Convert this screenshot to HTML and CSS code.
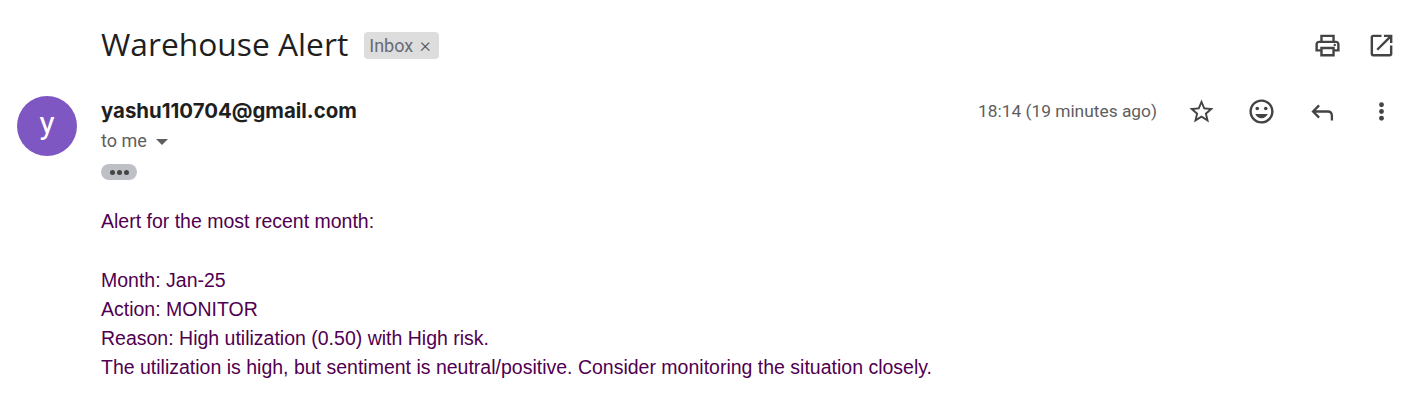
FILE: index.html
```html
<!DOCTYPE html>
<html lang="en">
<head>
    <meta charset="UTF-8">
    <meta name="viewport" content="width=device-width, initial-scale=1.0">
    <title>Warehouse Alert</title>
    <link rel="stylesheet" href="styles.css">
</head>
<body>
    <!-- Subject row -->
    <div class="subject-row">
        <div class="subject">
            <h1>Warehouse Alert</h1>
            <span class="label">Inbox <span class="label-x">×</span></span>
        </div>
        <div class="subject-icons">
            <svg class="icon" viewBox="0 0 24 24"><path d="M19 8h-1V3H6v5H5c-1.66 0-3 1.34-3 3v6h4v4h12v-4h4v-6c0-1.66-1.34-3-3-3zM8 5h8v3H8V5zm8 12v2H8v-4h8v2zm2-2v-2H6v2H4v-4c0-.55.45-1 1-1h14c.55 0 1 .45 1 1v4h-2z"/><circle cx="18" cy="11.5" r="1"/></svg>
            <svg class="icon" viewBox="0 0 24 24"><path d="M19 19H5V5h7V3H5c-1.11 0-2 .9-2 2v14c0 1.1.89 2 2 2h14c1.1 0 2-.9 2-2v-7h-2v7zM14 3v2h3.59l-9.83 9.83 1.41 1.41L19 6.41V10h2V3h-7z"/></svg>
        </div>
    </div>

    <!-- Message -->
    <div class="message">
        <div class="avatar">y</div>
        <div class="message-main">
            <div class="message-head">
                <div class="sender">yashu110704@gmail.com</div>
                <div class="head-right">
                    <span class="time">18:14 (19 minutes ago)</span>
                    <div class="head-icons">
                        <svg class="icon" viewBox="0 0 24 24"><path d="M22 9.24l-7.19-.62L12 2 9.19 8.63 2 9.24l5.46 4.73L5.82 21 12 17.27 18.18 21l-1.63-7.03L22 9.24zM12 15.4l-3.76 2.27 1-4.28-3.32-2.88 4.38-.38L12 6.1l1.71 4.04 4.38.38-3.32 2.88 1 4.28L12 15.4z"/></svg>
                        <svg class="icon" viewBox="0 0 24 24"><path d="M11.99 2C6.47 2 2 6.48 2 12s4.47 10 9.99 10C17.52 22 22 17.52 22 12S17.52 2 11.99 2zM12 20c-4.42 0-8-3.58-8-8s3.58-8 8-8 8 3.58 8 8-3.58 8-8 8z"/><circle cx="15.5" cy="9.5" r="1.5"/><circle cx="8.5" cy="9.5" r="1.5"/><path d="M12 17.5c2.33 0 4.31-1.46 5.11-3.5H6.89c.8 2.04 2.78 3.5 5.11 3.5z"/></svg>
                        <svg class="icon" viewBox="0 0 24 24"><path class="reply" d="M20.6 19.5V15.5c0-2.2-1.1-3.5-3.3-3.5H5M10 6.9L5 12l5 5.1"/></svg>
                        <svg class="icon" viewBox="0 0 24 24"><circle cx="12" cy="6.4" r="2"/><circle cx="12" cy="12" r="2"/><circle cx="12" cy="17.6" r="2"/></svg>
                    </div>
                </div>
            </div>
            <div class="to-me">to me <span class="caret"></span></div>
            <div class="trim"><span></span><span></span><span></span></div>
            <div class="body-text">
                <p>Alert for the most recent month:</p>
                <p>Month: Jan-25<br>
                Action: MONITOR<br>
                Reason: High utilization (0.50) with High risk.<br>
                The utilization is high, but sentiment is neutral/positive. Consider monitoring the situation closely.</p>
            </div>
        </div>
    </div>
</body>
</html>
```

FILE: styles.css
```css
body {
    margin: 0;
    background-color: #fff;
    font-family: Roboto, 'Liberation Sans', sans-serif;
    color: #222;
}

.subject-row {
    display: flex;
    justify-content: space-between;
    align-items: center;
    height: 50px;
    padding: 20px 14px 0 101px;
}

.subject {
    display: flex;
    align-items: center;
}

h1 {
    margin: 0;
    padding-bottom: 4px;
    font-family: 'Open Sans', sans-serif;
    font-size: 31.75px;
    font-weight: 400;
    color: #1f1f1f;
}

.label {
    margin-left: 16px;
    padding: 0 8px 0 5px;
    height: 27px;
    line-height: 27px;
    border-radius: 4px;
    background-color: #ddd;
    color: #666b75;
    font-size: 18px;
}

.label-x {
    margin-left: 2px;
    color: #555;
    font-size: 21px;
    font-weight: 300;
}

.subject-icons {
    display: flex;
    gap: 25px;
}

.icon {
    display: block;
    width: 29px;
    height: 29px;
    fill: #444;
}

.reply {
    fill: none;
    stroke: #444;
    stroke-width: 1.9;
}

.message {
    display: flex;
    padding: 26px 14px 0 17px;
}

.avatar {
    flex: none;
    width: 60px;
    height: 60px;
    margin-right: 24px;
    border-radius: 50%;
    background-color: #7e57c2;
    color: #fff;
    font-size: 32px;
    line-height: 54px;
    text-align: center;
}

.message-main {
    flex: 1;
}

.message-head {
    display: flex;
    justify-content: space-between;
    align-items: center;
    height: 30px;
}

.sender {
    padding-bottom: 2px;
    font-family: Inter, Roboto, sans-serif;
    font-size: 20.4px;
    font-weight: 700;
    color: #1f1f1f;
}

.head-right {
    display: flex;
    align-items: center;
}

.time {
    font-size: 17.35px;
    color: #5e5e5e;
}

.head-icons {
    display: flex;
    gap: 31px;
    margin-left: 30px;
}

.to-me {
    display: flex;
    align-items: center;
    margin-top: 4px;
    font-size: 18px;
    color: #5e5e5e;
}

.caret {
    margin: 2px 0 0 9px;
    border-top: 6px solid #5e5e5e;
    border-left: 6px solid transparent;
    border-right: 6px solid transparent;
}

.trim {
    display: flex;
    justify-content: center;
    align-items: center;
    gap: 2px;
    width: 36px;
    height: 16px;
    margin-top: 13px;
    border-radius: 8px;
    background-color: #bdc1c6;
}

.trim span {
    width: 5px;
    height: 5px;
    border-radius: 50%;
    background-color: #444;
}

.body-text {
    margin-top: 27px;
    font-family: 'Liberation Sans', Arial, sans-serif;
    font-size: 19.5px;
    line-height: 29.25px;
    color: #500050;
}

.body-text p {
    margin: 0 0 29.25px;
}
```
